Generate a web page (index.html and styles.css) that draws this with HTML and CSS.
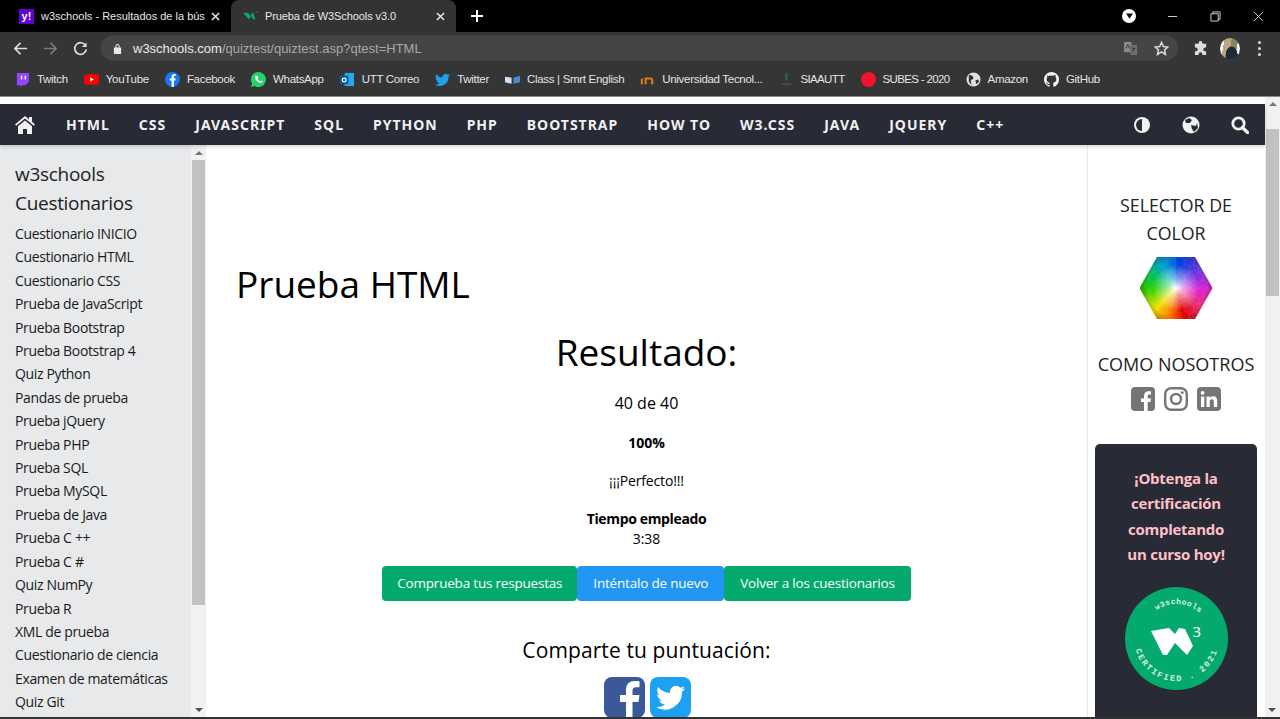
FILE: index.html
```html
<!DOCTYPE html>
<html lang="es">
<head>
    <meta charset="UTF-8">
    <title>Prueba de W3Schools v3.0</title>
    <link rel="stylesheet" href="styles.css">
</head>
<body>
    <!-- browser chrome -->
    <div class="tabstrip">
        <div class="tab">
            <span class="fav-yahoo">y!</span>
            <span class="tab-title">w3schools - Resultados de la bús</span>
            <svg class="tab-x" viewBox="0 0 10 10"><path d="M1 1L9 9M9 1L1 9"/></svg>
        </div>
        <div class="tab tab-active">
            <svg class="fav-w3" viewBox="0 0 18 12"><path d="M0 2h6l3 4 2-4h1l3 8h-3l-2-4-3 4z" fill="#04aa6d"/><path d="M15 1h3v1h-3z" fill="#04aa6d"/></svg>
            <span class="tab-title">Prueba de W3Schools v3.0</span>
            <svg class="tab-x" viewBox="0 0 10 10"><path d="M1 1L9 9M9 1L1 9"/></svg>
        </div>
        <svg class="new-tab" viewBox="0 0 12 12"><path d="M6 0v12M0 6h12"/></svg>
        <div class="win-controls">
            <span class="profile-dot"><svg viewBox="0 0 8 6"><path d="M0 0h8L4 6z" fill="#111"/></svg></span>
            <svg class="win-btn" viewBox="0 0 12 12"><path d="M1 6h10"/></svg>
            <svg class="win-btn" viewBox="0 0 12 12"><path d="M1 3h8v8H1zM3 3V1h8v8H9"/></svg>
            <svg class="win-btn" viewBox="0 0 12 12"><path d="M1 1l10 10M11 1L1 11"/></svg>
        </div>
    </div>

    <div class="toolbar">
        <svg class="tool-ico" viewBox="0 0 16 16"><path d="M15 8H2M8 2L2 8l6 6"/></svg>
        <svg class="tool-ico tool-off" viewBox="0 0 16 16"><path d="M1 8h13M8 2l6 6-6 6"/></svg>
        <svg class="tool-ico" viewBox="0 0 16 16"><path d="M13.5 5A6.2 6.2 0 1 0 14.2 9"/><path class="solid" d="M14.5 1.5v5h-5z"/></svg>
        <div class="omnibox">
            <svg class="lock" viewBox="0 0 10 12"><path d="M1 5h8v7H1z M2.700 5V3.300a2.300 2.300 0 0 1 4.600 0V5h-1.200V3.300a1.100 1.100 0 0 0-2.200 0V5z" fill="#e8e8e8"/></svg>
            <span class="url-host">w3schools.com</span><span class="url-path">/quiztest/quiztest.asp?qtest=HTML</span>
            <span class="omni-right">
                <svg class="translate" viewBox="0 0 16 16"><path d="M1 1h8v11H1z" fill="#8a8a8a"/><path d="M7 4h8v11H8z" fill="#6e6e6e"/><path d="M3 8l2-4 2 4M10 8h3M11.500 7v1c0 2-1 3-2 3.500" fill="none" stroke="#2e2e2e" stroke-width="1"/></svg>
                <svg class="star" viewBox="0 0 16 16"><path d="M8 1.500l2 4.400 4.700.5-3.500 3.200 1 4.700L8 11.500l-4.200 2.800 1-4.700L1.300 6.400 6 5.900z"/></svg>
            </span>
        </div>
        <svg class="puzzle" viewBox="0 0 16 16"><path d="M6 2a2 2 0 0 1 4 0v1h4v4h-1a2 2 0 0 0 0 4h1v4h-4v-1a2 2 0 0 0-4 0v1H2v-4h1a2 2 0 0 0 0-4H2V3h4z" fill="#dcdcdc"/></svg>
        <span class="avatar"></span>
        <span class="menu-dots"><i></i><i></i><i></i></span>
    </div>

    <div class="bookmarks">
        <span class="bm"><svg viewBox="0 0 16 16"><path d="M2 1h13v9l-4 4H8l-2 2v-2H2z" fill="#9146ff"/><path d="M7 4v4M11 4v4" stroke="#fff" stroke-width="1.500"/></svg>Twitch</span>
        <span class="bm"><svg viewBox="0 0 16 16"><rect y="2.500" width="16" height="11" rx="3" fill="#f00"/><path d="M6.500 5.500v5l4-2.500z" fill="#fff"/></svg>YouTube</span>
        <span class="bm"><svg viewBox="0 0 16 16"><circle cx="8" cy="8" r="8" fill="#1877f2"/><path d="M7 16V9H5V7h2V5c0-2 1-3 3-3h1.500v2H10.500c-.8 0-1 .4-1 1v2h2l-.4 2H9.500v7z" fill="#fff"/></svg>Facebook</span>
        <span class="bm"><svg viewBox="0 0 16 16"><path d="M8 0a8 8 0 0 0-6.800 12.200L0 16l3.900-1.100A8 8 0 1 0 8 0z" fill="#25d366"/><path d="M5 4c-1 1-1 2.500.5 4.500S9 12 11 11.500c1-.3 1.300-1 1.300-1.700L10.500 9l-.8.9c-1-.4-2.200-1.600-2.700-2.700l.8-.8L7 4.200z" fill="#fff"/></svg>WhatsApp</span>
        <span class="bm"><svg viewBox="0 0 16 16"><path d="M5 1h10v14H5z" fill="#28a8ea"/><path d="M0 4h9v9H0z" fill="#0a5ea8"/><circle cx="4.500" cy="8.500" r="2" fill="none" stroke="#fff" stroke-width="1.300"/></svg>UTT Correo</span>
        <span class="bm"><svg viewBox="0 0 16 16"><path d="M16 3.500c-.6.3-1.200.4-1.900.5.700-.4 1.200-1 1.400-1.800-.6.400-1.300.6-2 .8A3.300 3.300 0 0 0 7.900 5.800 9.300 9.300 0 0 1 1.100 2.400 3.300 3.300 0 0 0 2.100 6.800c-.5 0-1-.2-1.500-.4 0 1.600 1.100 2.900 2.600 3.200-.5.100-1 .2-1.500.1.400 1.300 1.600 2.200 3.100 2.300A6.600 6.600 0 0 1 0 13.300 9.300 9.300 0 0 0 14.400 5z" fill="#1da1f2"/></svg>Twitter</span>
        <span class="bm"><svg viewBox="0 0 16 16"><path d="M0 5l7 1V12.500l-7-1.500z" fill="#cfe2f5"/><path d="M16 4l-7 2V12.500l7-1.500z" fill="#3f8fd8"/></svg>Class | Smrt English</span>
        <span class="bm"><svg viewBox="0 0 16 16"><path d="M2 7v6M6 13V7h5a2 2 0 0 1 2 2v4" fill="none" stroke="#e07b1a" stroke-width="2.200"/></svg>Universidad Tecnol...</span>
        <span class="bm bm-tight"><svg viewBox="0 0 16 16"><path d="M7 1h2v8H7z" fill="#2e6a4a"/><path d="M3 12h10v2H3z" fill="#4a4a4a"/></svg>SIAAUTT</span>
        <span class="bm bm-tight"><svg viewBox="0 0 16 16"><circle cx="8" cy="8" r="8" fill="#f0142f"/></svg>SUBES - 2020</span>
        <span class="bm"><svg viewBox="0 0 16 16"><circle cx="8" cy="8" r="7.500" fill="#e0e0e0"/><path d="M3 3l4 1 1 3-3 2 1 5-3-4zM10 9l3-1 1 2-3 3z" fill="#333"/></svg>Amazon</span>
        <span class="bm"><svg viewBox="0 0 16 16"><path d="M8 0a8 8 0 0 0-2.500 15.600c.4.100.5-.2.500-.4v-1.400c-2.200.5-2.700-1-2.700-1-.4-.9-.9-1.200-.9-1.200-.7-.5.100-.5.100-.5.800.1 1.200.8 1.200.8.700 1.200 1.900.9 2.300.7.100-.5.300-.9.500-1.100-1.800-.2-3.600-.9-3.600-4 0-.9.300-1.600.8-2.100-.1-.2-.4-1 .1-2.100 0 0 .7-.2 2.200.8a7.600 7.600 0 0 1 4 0c1.500-1 2.200-.8 2.200-.8.400 1.100.2 1.900.1 2.100.5.600.8 1.300.8 2.100 0 3.100-1.900 3.800-3.700 4 .3.300.6.700.6 1.500v2.200c0 .2.100.5.600.4A8 8 0 0 0 8 0z" fill="#f0f0f0"/></svg>GitHub</span>
    </div>

    <!-- page -->
    <div class="page">
        <div class="page-inner">
            <nav class="topnav">
                <svg class="nav-home" viewBox="0 0 20 18"><path d="M10 0l4 3.300V1h3v4.800L20 8.500l-1.200 1.300L10 2.500 1.200 9.800 0 8.500z M3 10.300L10 4.500l7 5.800V18h-5v-5H8v5H3z" fill="#f1f1f1"/></svg>
                <div class="nav-links">
                    <a>HTML</a><a>CSS</a><a>JAVASCRIPT</a><a>SQL</a><a>PYTHON</a><a>PHP</a><a>BOOTSTRAP</a><a>HOW TO</a><a>W3.CSS</a><a>JAVA</a><a>JQUERY</a><a>C++</a>
                </div>
                <div class="nav-icons">
                    <svg viewBox="0 0 18 18"><circle cx="9" cy="9" r="8" fill="#f1f1f1"/><path d="M9 3a6 6 0 0 0 0 12z" fill="#282a35"/></svg>
                    <svg viewBox="0 0 18 18"><circle cx="9" cy="9" r="8.500" fill="#f1f1f1"/><path d="M7 2L10 4 8 7 4 7 3 4zM9 9l5 1 1-3 1 5-4 4-2-3z" fill="#282a35"/></svg>
                    <svg viewBox="0 0 18 18"><circle cx="7.500" cy="7.500" r="5.700" fill="none" stroke="#f1f1f1" stroke-width="2.800"/><path d="M11.500 11.500L16.500 16.500" stroke="#f1f1f1" stroke-width="3.200" stroke-linecap="round"/></svg>
                </div>
            </nav>

            <div class="columns">
                <aside class="sidebar">
                    <div class="side-scroll">
                        <h3 class="side-title">w3schools<br>Cuestionarios</h3>
                        <a>Cuestionario INICIO</a>
                        <a>Cuestionario HTML</a>
                        <a>Cuestionario CSS</a>
                        <a>Prueba de JavaScript</a>
                        <a>Prueba Bootstrap</a>
                        <a>Prueba Bootstrap 4</a>
                        <a>Quiz Python</a>
                        <a>Pandas de prueba</a>
                        <a>Prueba jQuery</a>
                        <a>Prueba PHP</a>
                        <a>Prueba SQL</a>
                        <a>Prueba MySQL</a>
                        <a>Prueba de Java</a>
                        <a>Prueba C ++</a>
                        <a>Prueba C #</a>
                        <a>Quiz NumPy</a>
                        <a>Prueba R</a>
                        <a>XML de prueba</a>
                        <a>Cuestionario de ciencia</a>
                        <a>Examen de matemáticas</a>
                        <a>Quiz Git</a>
                    </div>
                    <div class="side-bar">
                        <i class="arrow-up"></i>
                        <div class="side-thumb"></div>
                        <i class="arrow-down"></i>
                    </div>
                </aside>

                <main class="main">
                    <h1 class="quiz-title">Prueba HTML</h1>
                    <div class="result">
                        <h2 class="result-head">Resultado:</h2>
                        <p class="score">40 de 40</p>
                        <p class="percent">100%</p>
                        <p class="verdict">¡¡¡Perfecto!!!</p>
                        <p class="time"><b>Tiempo empleado</b><br>3:38</p>
                        <div class="actions">
                            <a class="btn btn-green">Comprueba tus respuestas</a>
                            <a class="btn btn-blue">Inténtalo de nuevo</a>
                            <a class="btn btn-green">Volver a los cuestionarios</a>
                        </div>
                        <h3 class="share-head">Comparte tu puntuación:</h3>
                        <div class="share">
                            <svg viewBox="0 0 41 41"><rect width="41" height="41" rx="8" fill="#3b5998"/><path d="M22 41V25h-6v-7h6v-5c0-6 3.500-9 8.500-9 2.500 0 4.500.2 5 .3v6h-3.500c-2.700 0-3.500 1.300-3.500 3.200V18h7l-1 7h-6v16z" fill="#fff"/></svg>
                            <svg viewBox="0 0 41 41"><rect width="41" height="41" rx="8" fill="#1da1f2"/><path d="M35 11.500c-1 .5-2.200.8-3.400 1 1.200-.7 2.200-1.900 2.600-3.300-1.100.7-2.400 1.200-3.800 1.500a6 6 0 0 0-10.200 5.400C15.300 15.900 11 13.600 8 10a6 6 0 0 0 1.900 8c-1 0-1.900-.3-2.700-.7 0 2.900 2.100 5.300 4.800 5.900-.9.200-1.800.3-2.700.1.800 2.400 3 4.100 5.600 4.100A12 12 0 0 1 6 29.900 17 17 0 0 0 32 14.800c1.200-.8 2.200-2 3-3.300z" fill="#fff"/></svg>
                        </div>
                    </div>
                </main>

                <aside class="rightcol">
                    <h4 class="right-head right-color">SELECTOR DE COLOR</h4>
                    <div class="hexwheel">
                        <svg viewBox="0 0 73 62">
                            <defs>
                                <pattern id="hexcells" width="9" height="15.600" patternUnits="userSpaceOnUse">
                                    <path d="M4.500 0l4.500 2.600v5.200l-4.500 2.600L0 7.800V2.600zM4.500 10.400v5.200M0 13l4.500 2.600L9 13" fill="none" stroke="rgba(255,255,255,0.13)" stroke-width="0.700"/>
                                </pattern>
                            </defs>
                            <rect width="73" height="62" fill="url(#hexcells)"/>
                        </svg>
                    </div>
                    <h4 class="right-head right-like">COMO NOSOTROS</h4>
                    <div class="likes">
                        <svg viewBox="0 0 24 24"><rect width="24" height="24" rx="4" fill="#757575"/><path d="M13 24v-9h-3v-3.500h3V9c0-3 1.800-4.700 4.500-4.700H20v3.200h-1.500c-1.300 0-1.800.6-1.800 1.800v2.200H20l-.5 3.500h-2.800v9z" fill="#fff"/></svg>
                        <svg viewBox="0 0 24 24"><rect x="1.200" y="1.200" width="21.600" height="21.600" rx="6" fill="none" stroke="#757575" stroke-width="2.400"/><circle cx="12" cy="12" r="5" fill="none" stroke="#757575" stroke-width="2.400"/><circle cx="18.300" cy="5.700" r="1.400" fill="#757575"/></svg>
                        <svg viewBox="0 0 24 24"><rect width="24" height="24" rx="4" fill="#757575"/><path d="M4 9.500h3.300V20H4zM5.600 4a1.900 1.900 0 1 1 0 3.800 1.900 1.900 0 0 1 0-3.800zM9.500 9.500h3.200V11c.6-1 1.800-1.800 3.500-1.800 3 0 4 2 4 5V20h-3.400v-5.200c0-1.500-.4-2.600-1.900-2.600s-2.100 1.100-2.100 2.600V20H9.500z" fill="#fff"/></svg>
                    </div>
                    <div class="cert-card">
                        <p class="cert-text">¡Obtenga la certificación completando un curso hoy!</p>
                        <svg class="badge" viewBox="0 0 103 103">
                            <defs>
                                <path id="arc-top" d="M17 51.500a34.500 34.500 0 0 1 69 0"/>
                                <path id="arc-bot" d="M9 51.500a42.500 42.500 0 0 0 85 0"/>
                            </defs>
                            <circle cx="51.500" cy="51.500" r="51.500" fill="#04aa6d"/>
                            <text class="badge-txt"><textPath href="#arc-top" startOffset="52%" text-anchor="middle">w3schools</textPath></text>
                            <text class="badge-txt badge-wide"><textPath href="#arc-bot" startOffset="50%" text-anchor="middle">CERTIFIED . 2021</textPath></text>
                            <path d="M26 44L44 41 50 47 54 41 60 42 68 59 62 68 50 56 42 68 38 68z" fill="#fff"/>
                            <text class="badge-3" x="67.500" y="50">3</text>
                        </svg>
                    </div>
                </aside>
            </div>
        </div>

        <div class="page-bar">
            <i class="arrow-up"></i>
            <div class="page-thumb"></div>
        </div>
        <i class="arrow-down page-down"></i>
    </div>
    <div class="bottom-line"></div>
</body>
</html>
```
FILE: styles.css
```css
* {
    box-sizing: border-box;
}

html, body {
    height: 719px;
    margin: 0;
    overflow: hidden;
}

body {
    display: flex;
    flex-direction: column;
    font-family: "Open Sans", "Noto Sans", Arial, sans-serif;
    background-color: #fff;
    color: #000;
}

/* browser chrome */
.tabstrip {
    display: flex;
    align-items: center;
    height: 32px;
    background-color: #000;
    color: #e8e8e8;
    flex: none;
}

.tab {
    display: flex;
    align-items: center;
    width: 231px;
    height: 32px;
    padding: 0 9px 0 19px;
    font-family: "Liberation Sans", Arial, sans-serif;
    font-size: 11px;
}

.tab-active {
    width: 225px;
    padding-left: 12px;
    background-color: #333;
    border-radius: 8px 8px 0 0;
    letter-spacing: -0.1px;
}

.tab-title {
    flex: 1;
    overflow: hidden;
    white-space: nowrap;
    margin-left: 7px;
}

.fav-yahoo {
    width: 15px;
    height: 15px;
    background-color: #5f01d1;
    color: #fff;
    font-size: 11px;
    font-weight: bold;
    line-height: 15px;
    text-align: center;
}

.fav-w3 {
    width: 15px;
    height: 12px;
}

.tab-x {
    width: 9px;
    height: 9px;
    margin: 0 2px 0 6px;
    fill: none;
    stroke: #eee;
    stroke-width: 1.6;
}

.new-tab {
    width: 12px;
    height: 12px;
    margin-left: 15px;
    fill: none;
    stroke: #fff;
    stroke-width: 2;
}

.win-controls {
    display: flex;
    align-items: center;
    margin-left: auto;
}

.profile-dot {
    display: flex;
    align-items: center;
    justify-content: center;
    width: 14px;
    height: 14px;
    margin-right: 31px;
    background-color: #fff;
    border-radius: 50%;
}

.profile-dot svg {
    width: 7px;
    height: 6px;
}

.win-btn {
    width: 11px;
    height: 11px;
    margin-right: 32px;
    fill: none;
    stroke: #ddd;
    stroke-width: 1;
}

.win-btn:last-child {
    margin-right: 16px;
}

.toolbar {
    display: flex;
    align-items: center;
    height: 32px;
    padding: 0 0 0 13px;
    background-color: #353535;
    flex: none;
}

.tool-ico {
    width: 15px;
    height: 15px;
    margin-right: 15px;
    fill: none;
    stroke: #dcdcdc;
    stroke-width: 1.8;
}

.tool-off {
    stroke: #7a7a7a;
}

.tool-ico .solid {
    fill: #dcdcdc;
    stroke: none;
}

.omnibox {
    display: flex;
    align-items: center;
    width: 1077px;
    height: 26px;
    margin-left: -2px;
    padding: 0 9px 0 12px;
    background-color: #454545;
    border-radius: 13px;
    font-family: "Liberation Sans", Arial, sans-serif;
    font-size: 13px;
}

.lock {
    width: 9px;
    height: 11px;
    margin-right: 11px;
}

.url-host {
    color: #ececec;
}

.url-path {
    color: #a8a8a8;
}

.omni-right {
    display: flex;
    align-items: center;
    gap: 16px;
    margin-left: auto;
}

.translate {
    width: 15px;
    height: 15px;
}

.star {
    width: 15px;
    height: 15px;
    fill: none;
    stroke: #dcdcdc;
    stroke-width: 1.6;
}

.puzzle {
    width: 15px;
    height: 15px;
    margin-left: 15px;
}

.avatar {
    width: 20px;
    height: 21px;
    margin-left: 12px;
    border-radius: 50%;
    background:
        radial-gradient(ellipse at 58% 85%, #1d2a3a 0 36%, rgba(29, 42, 58, 0) 38%),
        linear-gradient(100deg, #f5f5f5 0 20%, #b9a57f 20% 50%, #7d8a60 50% 78%, #f0f0f0 78%);
}

.menu-dots {
    display: flex;
    flex-direction: column;
    gap: 3px;
    margin-left: 18px;
}

.menu-dots i {
    width: 3px;
    height: 3px;
    background-color: #ddd;
    border-radius: 50%;
}

.bookmarks {
    display: flex;
    align-items: center;
    height: 33px;
    padding: 0 0 2px 15px;
    background-color: #353535;
    border-bottom: 1px solid #8a8a8a;
    color: #e4e4e4;
    font-family: "Liberation Sans", Arial, sans-serif;
    font-size: 11.500px;
    letter-spacing: -0.3px;
    flex: none;
}

.bm {
    display: flex;
    align-items: center;
    gap: 7px;
    margin-right: 16px;
    white-space: nowrap;
}

.bm-tight {
    letter-spacing: -0.65px;
}

.bm svg {
    width: 15px;
    height: 15px;
}

/* page */
.page {
    position: relative;
    display: flex;
    flex: 1;
    min-height: 0;
    overflow: hidden;
}

.page-inner {
    flex: 1;
    min-width: 0;
    padding-top: 7px;
    display: flex;
    flex-direction: column;
}

.page-bar {
    width: 15px;
    background-color: #f1f1f1;
    flex: none;
    padding-top: 5px;
    display: flex;
    flex-direction: column;
    align-items: center;
}

.page-thumb {
    width: 13px;
    height: 167px;
    margin-top: 23px;
    background-color: #c1c1c1;
}

.page-down {
    position: absolute;
    right: 4px;
    bottom: 5px;
}

.arrow-up {
    width: 0;
    height: 0;
    border-left: 4px solid transparent;
    border-right: 4px solid transparent;
    border-bottom: 4px solid #777;
}

.arrow-down {
    width: 0;
    height: 0;
    border-left: 4px solid transparent;
    border-right: 4px solid transparent;
    border-top: 4px solid #505050;
}

.bottom-line {
    height: 2px;
    background-color: #333;
    flex: none;
}

.topnav {
    display: flex;
    align-items: center;
    height: 41px;
    padding: 0 16px 0 15px;
    background-color: #282a35;
    color: #f1f1f1;
    box-shadow: 0 2px 4px rgba(0, 0, 0, 0.16);
    position: relative;
    flex: none;
}

.nav-home {
    width: 20px;
    height: 18px;
}

.nav-links {
    display: flex;
    margin-left: 31px;
    gap: 29px;
    font-family: "Noto Sans", Arial, sans-serif;
    font-size: 14px;
    font-weight: 700;
    letter-spacing: 1px;
}

.nav-icons {
    display: flex;
    align-items: center;
    gap: 31px;
    margin-left: auto;
}

.nav-icons svg {
    width: 18px;
    height: 18px;
}

.columns {
    display: flex;
    flex: 1;
    min-height: 0;
}

.sidebar {
    display: flex;
    width: 206px;
    background-color: #e7e9eb;
    flex: none;
}

.side-scroll {
    flex: 1;
    padding: 15px 0 0 15px;
    overflow: hidden;
}

.side-scroll a {
    display: block;
    font-size: 14px;
    line-height: 23.4px;
    color: #1a1a1a;
    white-space: nowrap;
    letter-spacing: -0.35px;
}

.side-title {
    margin: 0 0 4px;
    font-size: 19px;
    font-weight: 400;
    line-height: 29px;
    color: #222;
    letter-spacing: -0.3px;
}

.side-bar {
    display: flex;
    flex-direction: column;
    align-items: center;
    width: 15px;
    padding: 6px 0 5px;
    background-color: #f1f1f1;
}

.side-thumb {
    width: 13px;
    height: 445px;
    margin-top: 5px;
    background-color: #c1c1c1;
}

.side-bar .arrow-down {
    margin-top: auto;
}

.main {
    flex: 1;
    min-width: 0;
    padding: 112px 16px 0 30px;
    background-color: #fff;
}

.quiz-title {
    margin: 0;
    font-size: 37px;
    font-weight: 400;
    line-height: 54px;
}

.result {
    margin-left: -14px;
    text-align: center;
}

.result-head {
    margin: 14px 0 0;
    font-size: 37px;
    font-weight: 400;
    line-height: 54px;
}

.score {
    margin: 12px 0 0;
    font-size: 16px;
    line-height: 24px;
}

.percent {
    margin: 18px 0 0;
    font-size: 14px;
    font-weight: 700;
    line-height: 20px;
}

.verdict {
    margin: 18px 0 0;
    font-size: 14px;
    line-height: 20px;
    letter-spacing: -0.15px;
}

.time {
    margin: 18px 0 0;
    font-size: 14px;
    line-height: 20px;
}

.time b {
    letter-spacing: -0.35px;
}

.actions {
    display: flex;
    justify-content: center;
    margin-top: 17px;
}

.btn {
    height: 35px;
    padding: 0 16px;
    font-size: 13.500px;
    letter-spacing: -0.2px;
    line-height: 35px;
    color: #fff;
    border-radius: 4px;
    white-space: nowrap;
}

.btn:first-child {
    padding: 0 15px;
}

.btn-green {
    background-color: #04aa6d;
}

.btn-blue {
    background-color: #2196f3;
}

.share-head {
    margin: 33px 0 0;
    font-size: 21px;
    font-weight: 400;
    line-height: 32px;
    letter-spacing: 0.1px;
}

.share {
    display: flex;
    justify-content: center;
    gap: 5px;
    margin-top: 11px;
    padding-left: 2px;
}

.share svg {
    width: 41px;
    height: 41px;
}

.rightcol {
    display: flex;
    flex-direction: column;
    align-items: center;
    width: 178px;
    padding: 46px 8px 0 7px;
    border-left: 1px solid #e7e9eb;
    background-color: #fff;
    flex: none;
}

.right-head {
    margin: 0;
    font-size: 18px;
    font-weight: 400;
    line-height: 28px;
    text-align: center;
    color: #222;
}

.right-color {
    width: 130px;
    font-size: 17.800px;
}

.hexwheel {
    width: 73px;
    height: 62px;
    margin-top: 10px;
    clip-path: polygon(24% 0, 76% 0, 100% 50%, 76% 100%, 24% 100%, 0 50%);
    background:
        radial-gradient(circle at 50% 50%, rgba(50, 25, 15, 0) 60%, rgba(50, 25, 15, 0.55) 85%),
        radial-gradient(circle at 49% 50%, #fff 0, rgba(255, 255, 255, 0.6) 14%, rgba(255, 255, 255, 0) 48%),
        conic-gradient(from 0deg, #0040e0 10deg, #9030e0 65deg, #e020d0 95deg, #e83070 130deg, #e00000 165deg, #ff8000 195deg, #f0e000 225deg, #20d000 270deg, #00c060 300deg, #00a0d0 330deg, #0040e0 370deg);
}

.hexwheel svg {
    display: block;
    width: 100%;
    height: 100%;
}

.right-like {
    margin-top: 31px;
}

.likes {
    display: flex;
    gap: 9px;
    margin-top: 9px;
}

.likes svg {
    width: 24px;
    height: 24px;
}

.cert-card {
    width: 162px;
    flex: 1;
    margin-top: 33px;
    padding-top: 22px;
    background-color: #282a35;
    border-radius: 5px 5px 0 0;
    text-align: center;
}

.cert-text {
    margin: 0 auto;
    width: 115px;
    font-size: 15px;
    font-weight: 700;
    line-height: 25.400px;
    letter-spacing: -0.25px;
    color: #ffc0c7;
}

.badge {
    display: block;
    width: 103px;
    height: 103px;
    margin: 19px auto 0;
}

.badge-txt {
    font-family: "Liberation Mono", monospace;
    font-size: 8px;
    font-weight: 700;
    letter-spacing: 0.4px;
    fill: #d9eee1;
}

.badge-wide {
    font-size: 8.500px;
    letter-spacing: 1.800px;
}

.badge-3 {
    font-family: "Noto Sans", Arial, sans-serif;
    font-size: 15px;
    fill: #fff;
}
```
